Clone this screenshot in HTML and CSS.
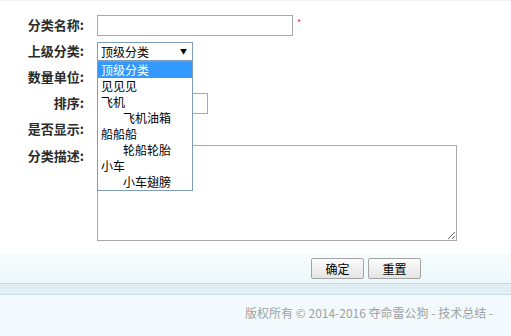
FILE: index.html
```html
<!DOCTYPE html>
<html lang="zh">
<head>
<meta charset="utf-8">
<title>分类</title>
<link rel="stylesheet" href="styles.css">
</head>
<body>
<div class="page">
  <form class="form">
    <div class="row">
      <label class="lbl">分类名称:</label>
      <div class="field"><input class="txt txt-name" type="text"><span class="req">*</span></div>
    </div>
    <div class="row">
      <label class="lbl">上级分类:</label>
      <div class="field sel-wrap">
        <div class="select"><span>顶级分类</span><span class="arrow">▼</span></div>
        <ul class="options">
          <li class="opt active">顶级分类</li>
          <li class="opt">见见见</li>
          <li class="opt">飞机</li>
          <li class="opt sub">飞机油箱</li>
          <li class="opt">船船船</li>
          <li class="opt sub">轮船轮胎</li>
          <li class="opt">小车</li>
          <li class="opt sub">小车翅膀</li>
        </ul>
      </div>
    </div>
    <div class="row">
      <label class="lbl">数量单位:</label>
      <div class="field"><input class="txt txt-unit" type="text"></div>
    </div>
    <div class="row">
      <label class="lbl">排序:</label>
      <div class="field"><input class="txt txt-short" type="text"></div>
    </div>
    <div class="row">
      <label class="lbl">是否显示:</label>
      <div class="field"></div>
    </div>
    <div class="row row-top">
      <label class="lbl lbl-top">分类描述:</label>
      <div class="field"><textarea class="area"></textarea></div>
    </div>
  </form>
  <div class="actions">
    <button class="btn" type="button">确定</button>
    <button class="btn" type="button">重置</button>
  </div>
  <div class="stripe"></div>
  <div class="footer">版权所有 © 2014-2016 夺命雷公狗 - 技术总结 -</div>
</div>
</body>
</html>
```

FILE: styles.css
```css
html, body {
  margin: 0;
  padding: 0;
  background: #ffffff;
}
body {
  font-family: "Noto Sans CJK SC", "DejaVu Sans", sans-serif;
  font-size: 12px;
  color: #333;
}
.page {
  width: 511px;
  height: 336px;
  overflow: hidden;
  border-top: 1px solid #f2f2f2;
  box-sizing: border-box;
}
.form {
  padding-top: 11px;
  margin: 0;
}
.row {
  display: flex;
  align-items: center;
  height: 26px;
}
.row-top {
  align-items: flex-start;
  height: auto;
  padding-top: 3px;
}
.lbl {
  width: 84px;
  text-align: right;
  font-weight: bold;
  font-size: 13px;
  color: #2b2b2b;
  flex: none;
  margin-right: 13px;
  line-height: 18px;
}
.lbl-top {
  line-height: 22px;
}
.field {
  display: flex;
  align-items: center;
  position: relative;
}
.txt {
  box-sizing: border-box;
  height: 21px;
  border: 1px solid #a9a9a9;
  padding: 0 2px;
  margin: 0;
  background: #fff;
}
.txt-name { width: 196px; }
.txt-short { width: 111px; }
.txt-unit { width: 90px; }
.req {
  color: #e33;
  font-size: 9px;
  margin-left: 4px;
  position: relative;
  top: -3px;
}
.select {
  box-sizing: border-box;
  width: 96px;
  height: 19px;
  border: 1px solid #7f9db9;
  display: flex;
  align-items: center;
  justify-content: space-between;
  padding: 0 5px 0 3px;
  font-size: 12px;
  color: #000;
  background: #fff;
}
.arrow {
  font-size: 7px;
  color: #000;
}
.options {
  position: absolute;
  left: 0;
  top: 19px;
  width: 96px;
  box-sizing: border-box;
  margin: 0;
  padding: 0;
  list-style: none;
  border: 1px solid #7f9db9;
  background: #fff;
  z-index: 5;
}
.opt {
  height: 16px;
  line-height: 16px;
  font-size: 12px;
  color: #000;
  padding-left: 3px;
  white-space: nowrap;
}
.opt.sub { padding-left: 25px; }
.opt.active {
  background: #3399ff;
  color: #fff;
}
.area {
  box-sizing: border-box;
  width: 360px;
  height: 96px;
  border: 1px solid #a9a9a9;
  margin: 0;
  resize: both;
  display: block;
}
.actions {
  margin-top: 13px;
  height: 29px;
  background: linear-gradient(#f7fcfd, #ecf8fb);
  display: flex;
  align-items: center;
  gap: 4px;
  padding-left: 311px;
  box-sizing: border-box;
}
.btn {
  width: 53px;
  height: 21px;
  padding: 0;
  font-family: "Noto Sans CJK SC", sans-serif;
  font-size: 12px;
  color: #000;
  border: 1px solid #a3a3a3;
  border-radius: 2px;
  background: linear-gradient(#fdfdfd, #e4e4e4);
}
.stripe {
  height: 12px;
  box-sizing: border-box;
  border-top: 1px solid #c3dbe4;
  border-bottom: 1px solid #c9dfe7;
  background: repeating-linear-gradient(#dcecf2 0px, #dcecf2 2px, #e9f4f8 2px, #e9f4f8 3px);
}
.footer {
  height: 41px;
  background: #f3fafd;
  text-align: right;
  padding-right: 18px;
  line-height: 36px;
  color: #a0a0a0;
  font-size: 12px;
}
```
